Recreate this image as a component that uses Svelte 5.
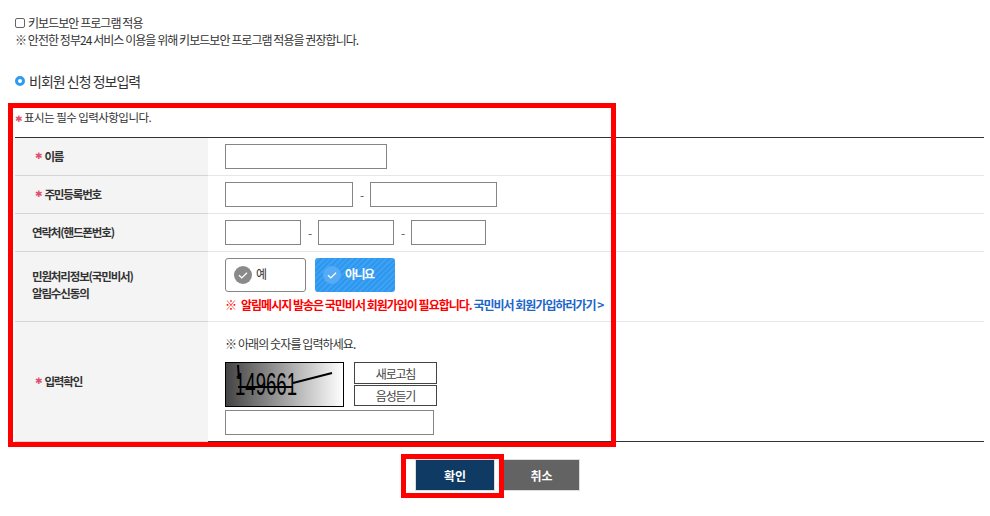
<script lang="ts">
    const star = '✱';
</script>

<main class="page">
    <div class="keyboard">
        <label class="check"><input type="checkbox" /> 키보드보안 프로그램 적용</label>
        <p>※ 안전한 정부24 서비스 이용을 위해 키보드보안 프로그램 적용을 권장합니다.</p>
    </div>

    <h2><span class="dot"></span>비회원 신청 정보입력</h2>

    <section class="form">
        <div class="highlight form-mark"></div>
        <p class="legend"><span class="star">{star}</span> 표시는 필수 입력사항입니다.</p>

        <div class="table">
            <div class="row r1">
                <div class="th req"><span class="star">{star}</span> 이름</div>
                <div class="td"><input class="w162" type="text" /></div>
            </div>
            <div class="row r1">
                <div class="th req"><span class="star">{star}</span> 주민등록번호</div>
                <div class="td">
                    <input class="w128" type="text" /><span class="dash">-</span><input class="w127" type="text" />
                </div>
            </div>
            <div class="row r1">
                <div class="th">연락처(핸드폰번호)</div>
                <div class="td">
                    <input class="w76" type="text" /><span class="dash">-</span><input class="w76" type="text" /><span class="dash">-</span><input class="w75" type="text" />
                </div>
            </div>
            <div class="row r2">
                <div class="th two">민원처리정보(국민비서)<br />알림수신동의</div>
                <div class="td column">
                    <div class="choices">
                        <button class="choice" type="button">
                            <svg viewBox="0 0 18 18" width="18" height="18"><circle cx="9" cy="9" r="9" fill="#8a8a8a" /><path d="M5 9.3l2.8 2.6L13 6.8" fill="none" stroke="#fff" stroke-width="1.4" /></svg>
                            <span>예</span>
                        </button>
                        <button class="choice on" type="button">
                            <svg viewBox="0 0 18 18" width="18" height="18"><circle cx="9" cy="9" r="9" fill="#55abf5" /><path d="M5 9.3l2.8 2.6L13 6.8" fill="none" stroke="#fff" stroke-width="1.4" /></svg>
                            <span>아니요</span>
                        </button>
                    </div>
                    <p class="notice">
                        <span class="red"><span class="mark">※</span>알림메시지 발송은 국민비서 회원가입이 필요합니다.</span>
                        <span class="blue">국민비서 회원가입하러가기 &gt;</span>
                    </p>
                </div>
            </div>
            <div class="row r3">
                <div class="th req"><span class="star">{star}</span> 입력확인</div>
                <div class="td column">
                    <p class="hint">※ 아래의 숫자를 입력하세요.</p>
                    <div class="captcha">
                        <div class="image">
                            <svg viewBox="0 0 117 43" width="117" height="43">
                                <path d="M12 2l1 14M67 20L106 10M12 24h54" stroke="#000" stroke-width="2" fill="none" />
                                <text x="9" y="32" class="digits" textLength="62" lengthAdjust="spacingAndGlyphs">149661</text>
                            </svg>
                        </div>
                        <div class="capbtns">
                            <button type="button">새로고침</button>
                            <button type="button">음성듣기</button>
                        </div>
                    </div>
                    <input class="w209" type="text" />
                </div>
            </div>
        </div>
    </section>

    <div class="actions">
        <div class="highlight action-mark"></div>
        <button class="btn ok" type="button">확인</button>
        <button class="btn cancel" type="button">취소</button>
    </div>
</main>

<style>
    :global(body) {
        margin: 0;
        background: #fff;
    }

    .page {
        box-sizing: border-box;
        width: 990px;
        height: 516px;
        padding: 15px 6px 0 15px;
        overflow: hidden;
        font-family: "Noto Sans CJK KR", "Noto Sans", sans-serif;
        font-size: 12px;
        letter-spacing: -0.95px;
        color: #333;
    }

    p {
        margin: 0;
    }

    input[type="text"] {
        box-sizing: border-box;
        height: 25px;
        margin: 0;
        padding: 0;
        background: #fff;
        border: 1px solid #858585;
        border-radius: 0;
    }

    .keyboard {
        line-height: 18px;
    }

    .check {
        display: flex;
        align-items: center;
        gap: 3px;
        height: 16px;
        font-size: 12px;
    }

    .check input {
        width: 10px;
        height: 10px;
        margin: 0;
        appearance: none;
        border: 1px solid #666;
        border-radius: 2px;
    }

    h2 {
        display: flex;
        align-items: center;
        gap: 4px;
        margin: 22px 0 0;
        height: 20px;
        font-size: 14px;
        font-weight: 400;
        letter-spacing: -1px;
    }

    .dot {
        box-sizing: border-box;
        width: 10px;
        height: 10px;
        border: 3px solid #2f9bef;
        border-radius: 50%;
    }

    .form {
        position: relative;
        margin-top: 10px;
    }

    .legend {
        box-sizing: border-box;
        height: 36px;
        padding-top: 5px;
        line-height: 22px;
        font-size: 11.5px;
        letter-spacing: -0.55px;
    }

    .star {
        font-family: "DejaVu Sans", sans-serif;
        font-size: 9px;
        color: #e0506a;
    }

    .table {
        border-top: 1px solid #333;
        border-bottom: 1px solid #333;
    }

    .row {
        display: grid;
        grid-template-columns: 193px 1fr;
        border-bottom: 1px solid #e6e6e6;
    }

    .row:last-child {
        border-bottom: 0;
    }

    .r1 {
        height: 37px;
    }

    .r2 {
        height: 69px;
    }

    .r3 {
        height: 119px;
    }

    .th {
        box-sizing: border-box;
        display: flex;
        align-items: center;
        padding: 0 0 1px 17px;
        background: #f4f4f4;
        box-shadow: 0 1px 0 #d5d5d5;
        font-size: 11.5px;
        font-weight: 700;
        letter-spacing: -1.15px;
    }

    .req {
        padding-left: 20px;
        gap: 3px;
    }

    .two {
        display: block;
        padding-top: 16px;
        line-height: 17px;
    }

    .td {
        display: flex;
        align-items: center;
        padding-left: 17px;
    }

    .column {
        flex-direction: column;
        align-items: flex-start;
    }

    .dash {
        width: 17px;
        text-align: center;
        color: #555;
    }

    .w162 { width: 162px; }
    .w128 { width: 128px; }
    .w127 { width: 127px; }
    .w76 { width: 76px; }
    .w75 { width: 75px; }
    .w209 { width: 209px; }

    .choices {
        display: flex;
        gap: 9px;
        margin-top: 6px;
    }

    .choice {
        box-sizing: border-box;
        display: flex;
        align-items: center;
        gap: 4px;
        width: 81px;
        height: 34px;
        padding: 0 0 0 8px;
        font: inherit;
        letter-spacing: -1px;
        color: #333;
        background: #fff;
        border: 1px solid #858585;
        border-radius: 3px;
    }

    .choice span {
        margin-top: -3px;
    }

    .choice.on {
        width: 80px;
        padding-left: 8px;
        color: #fff;
        font-weight: 700;
        letter-spacing: -1.5px;
        border: 0;
        background: repeating-linear-gradient(135deg, #2e98f0 0 2px, #3fa1f2 2px 4px);
    }

    .notice {
        margin-top: 4px;
        line-height: 17px;
        font-size: 12px;
        font-weight: 700;
        letter-spacing: -1px;
        white-space: nowrap;
    }

    .mark {
        margin-right: 5px;
    }

    .red {
        color: #f00;
    }

    .blue {
        color: #1b66c9;
    }

    .hint {
        margin-top: 13px;
        line-height: 18px;
        letter-spacing: -0.9px;
    }

    .captcha {
        display: flex;
        gap: 10px;
        margin-top: 9px;
    }

    .image {
        box-sizing: border-box;
        width: 119px;
        height: 45px;
        border: 1px solid #000;
        background: linear-gradient(90deg, #444, #fff);
    }

    .image svg {
        display: block;
    }

    .digits {
        font-family: "Liberation Sans", sans-serif;
        font-size: 32px;
        letter-spacing: 0;
        fill: #000;
    }

    .capbtns {
        display: flex;
        flex-direction: column;
        gap: 1px;
    }

    .capbtns button {
        box-sizing: border-box;
        width: 83px;
        height: 21px;
        padding: 0;
        font: inherit;
        letter-spacing: -1.2px;
        color: #444;
        background: #fff;
        border: 1px solid #444;
    }

    .capbtns button:first-child {
        height: 22px;
    }

    .captcha + input {
        margin-top: 3px;
    }

    .actions {
        position: relative;
        display: flex;
        justify-content: flex-start;
        gap: 8px;
        margin: 17px 0 0 400px;
    }

    .btn {
        box-sizing: border-box;
        width: 80px;
        height: 32px;
        padding: 0;
        font: inherit;
        font-weight: 700;
        color: #fff;
        border: 1px solid #ddd;
    }

    .ok {
        background: #0f3a63;
    }

    .cancel {
        width: 77px;
        background: #636363;
    }

    .highlight {
        position: absolute;
        box-sizing: border-box;
        border: 5px solid #f00;
        pointer-events: none;
        z-index: 2;
    }

    .form-mark {
        left: -7px;
        top: 2px;
        width: 608px;
        height: 344px;
    }

    .action-mark {
        left: -14px;
        top: -5px;
        width: 103px;
        height: 44px;
    }
</style>
